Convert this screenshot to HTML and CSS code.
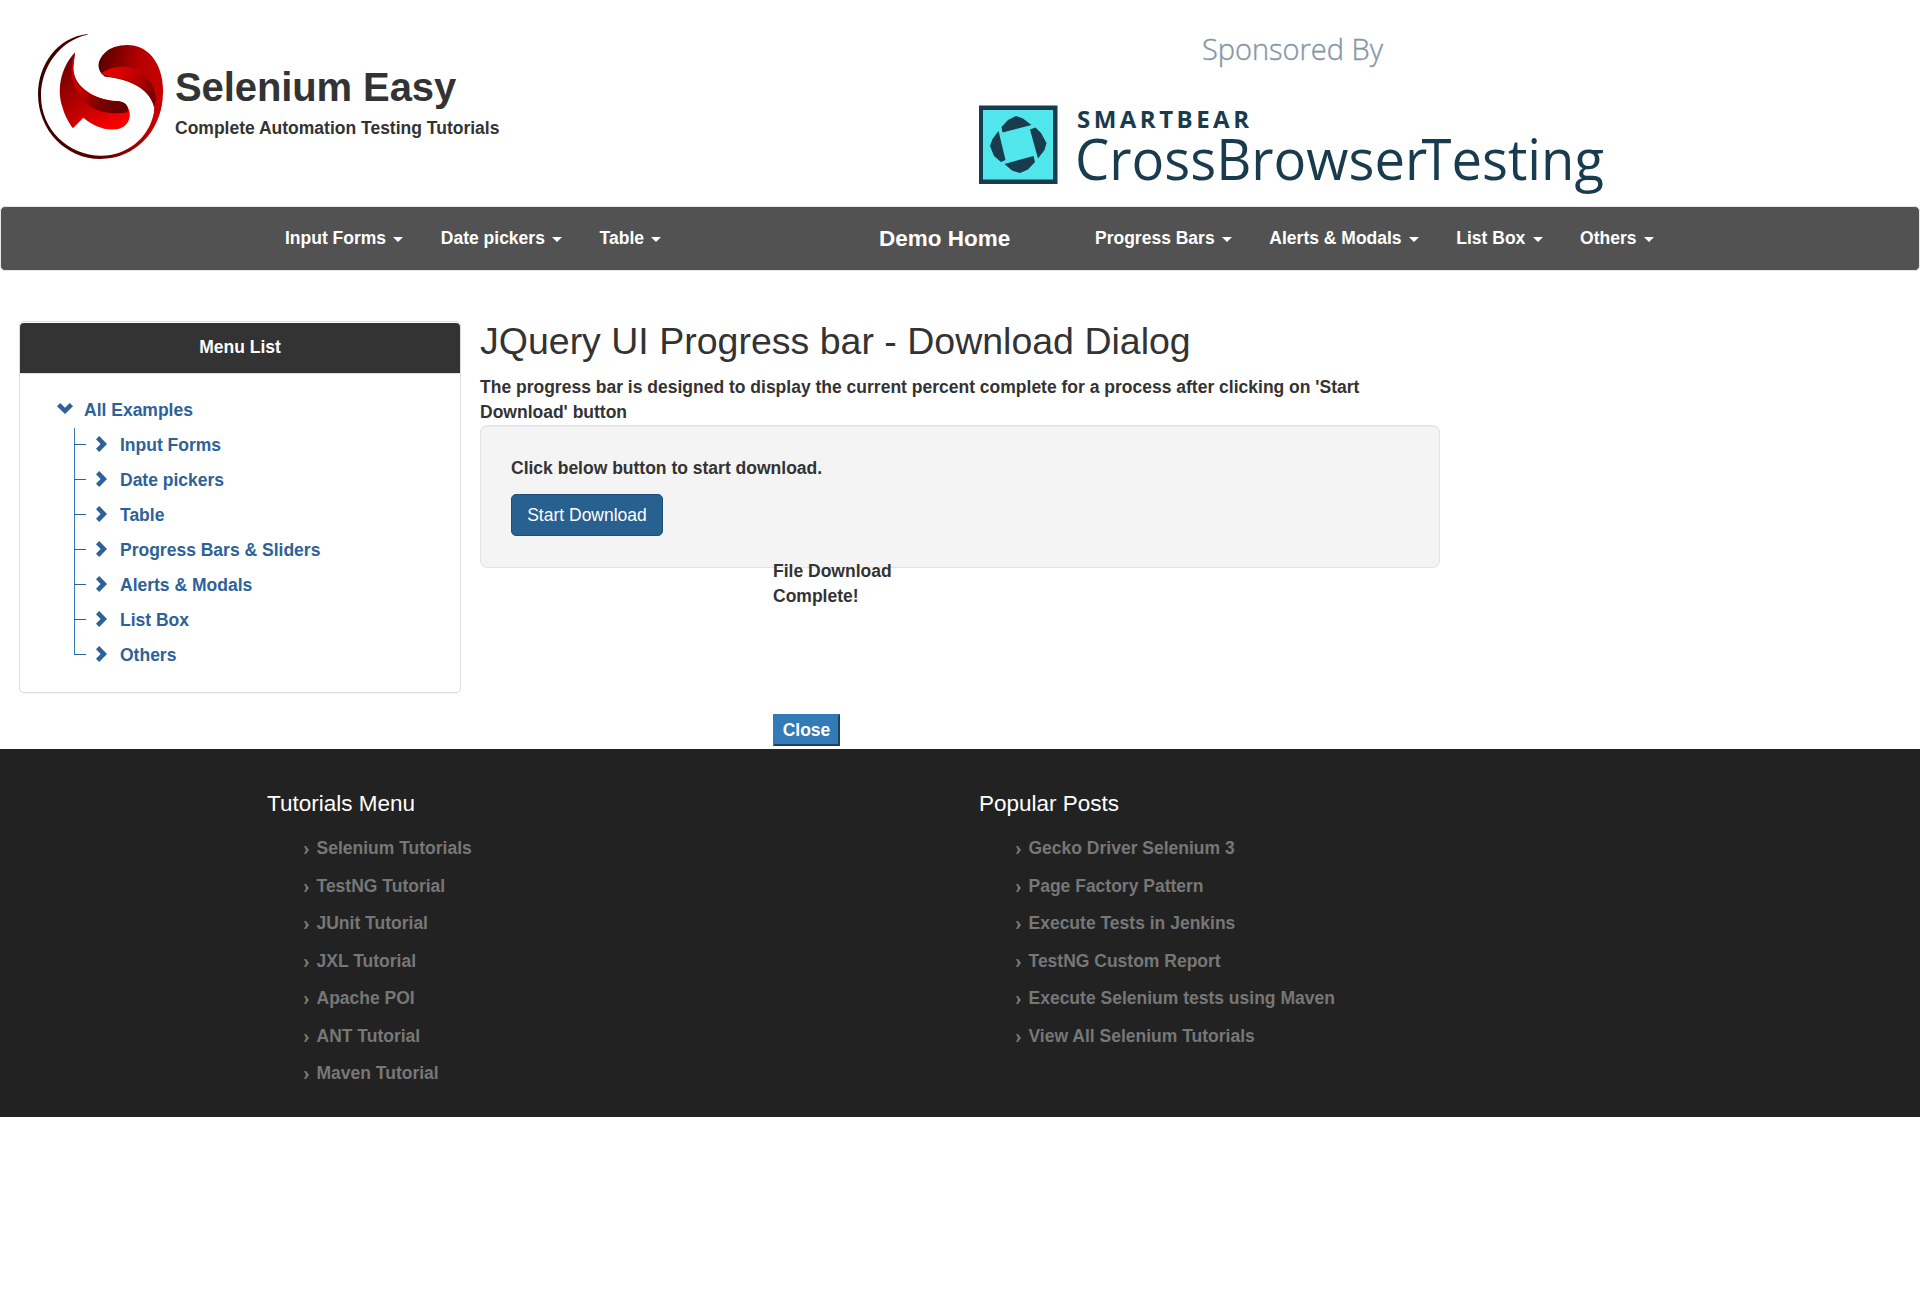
FILE: index.html
```html
<!DOCTYPE html>
<html lang="en">
<head>
<meta charset="utf-8">
<title>Selenium Easy - JQuery UI Progress bar</title>
<link rel="stylesheet" href="styles.css">
</head>
<body>
<svg class="defs" width="0" height="0" aria-hidden="true">
  <symbol id="chev-right" viewBox="0 0 11 16"><path d="M3.2 0 11 8 3.2 16 0 12.8 4.6 8 0 3.2Z"/></symbol>
  <symbol id="chev-down" viewBox="0 0 16 11"><path d="M0 3.2 3.2 0 8 4.7 12.8 0 16 3.2 8 11Z"/></symbol>
  <symbol id="chev-small" viewBox="0 0 5 8"><path d="M0 0H2L5 4 2 8H0L2 4Z"/></symbol>
</svg>
<header class="header">
  <a class="brand">
    <svg class="brand-logo" viewBox="0 0 375 375" width="125" height="125">
      <defs>
        <linearGradient id="ring" x1="0" y1="0" x2="1" y2="0"><stop offset="0" stop-color="#3a0000"/><stop offset=".5" stop-color="#5a0000"/><stop offset="1" stop-color="#d80000"/></linearGradient>
        <linearGradient id="top" x1="0" y1=".3" x2="1" y2=".5"><stop offset="0" stop-color="#5a0000"/><stop offset=".6" stop-color="#b80000"/><stop offset="1" stop-color="#c80000"/></linearGradient>
        <linearGradient id="fold" x1="0" y1="0" x2="1" y2=".6"><stop offset="0" stop-color="#f00000"/><stop offset=".5" stop-color="#c80000"/><stop offset="1" stop-color="#780000"/></linearGradient>
        <linearGradient id="low" x1=".1" y1=".1" x2=".7" y2="1"><stop offset="0" stop-color="#700000"/><stop offset=".5" stop-color="#b40000"/><stop offset="1" stop-color="#f80000"/></linearGradient>
        <linearGradient id="mid" x1="0" y1=".1" x2="1" y2=".8"><stop offset="0" stop-color="#d80000"/><stop offset=".35" stop-color="#c80000"/><stop offset=".65" stop-color="#800000"/><stop offset="1" stop-color="#600000"/></linearGradient>
      </defs>
      <path fill="url(#ring)" d="M148 0C60 10 0 90 0 180C0 290 85 375 187 375C292 375 368 292 374 190L347 240C330 315 265 365 190 365C90 365 9 285 9 185C9 100 65 20 148 2Z"/>
      <path fill="url(#top)" d="M201 128C174 110 176 80 200 57C222 34 275 25 310 42C360 67 380 130 374 190C370 236 356 268 333 292C345 262 350 240 348 213C330 165 280 136 201 128Z"/>
      <path fill="url(#fold)" d="M190 118C212 102 250 92 285 103C325 118 352 150 354 198L348 220C338 165 275 135 215 128Q199 126 190 118Z"/>
      <path fill="url(#low)" d="M111 55C65 105 58 170 72 215C80 245 92 265 105 283L136 251C165 275 200 291 240 285C275 277 282 242 270 222C262 205 245 200 220 201C160 190 105 155 106 100Z"/>
      <path fill="url(#mid)" d="M111 55C97 90 96 125 112 160C138 222 190 246 269 235C275 218 262 201 235 201C175 195 100 170 106 95Z"/>
    </svg>
    <span class="brand-text">
      <span class="brand-name">Selenium Easy</span>
      <span class="brand-slogan">Complete Automation Testing Tutorials</span>
    </span>
  </a>
  <a class="sponsor">
    <svg width="640" height="206" viewBox="970 0 640 206">
      <text class="sp-by" x="1202" y="60" textLength="181" lengthAdjust="spacingAndGlyphs">Sponsored By</text>
      <rect x="979" y="105.500" width="78.500" height="78.500" fill="#183b4d"/>
      <rect x="983" y="110" width="70" height="69.500" fill="#50e6ec"/>
      <g fill="#183b4d">
        <path d="M1002.500 132.500 1001.500 127 1008 120 1016 116 1023 118.500 1031.500 125Z"/>
        <path d="M1030 129.500 1035.500 127.500 1041 133 1046.500 143 1044.500 150 1038 158.500Z"/>
        <path d="M1004.500 164 1033.500 156 1035 162 1028 169.500 1020 173 1012 170.500Z"/>
        <path d="M998.500 131 1005.500 160 1001 162 994 156 990 146 992.500 139Z"/>
      </g>
      <text class="sp-bear" x="1077" y="127.500" textLength="172" lengthAdjust="spacing">SMARTBEAR</text>
      <text class="sp-cbt" x="1075" y="180" textLength="529" lengthAdjust="spacingAndGlyphs">CrossBrowser<tspan dx="-6">Testing</tspan></text>
    </svg>
  </a>
</header>
<nav class="nav">
  <ul class="nav-left">
    <li>Input Forms<i class="caret"></i></li><li>Date pickers<i class="caret"></i></li><li>Table<i class="caret"></i></li>
  </ul>
  <a class="nav-home">Demo Home</a>
  <ul class="nav-right">
    <li>Progress Bars<i class="caret"></i></li><li>Alerts &amp; Modals<i class="caret"></i></li><li>List Box<i class="caret"></i></li><li>Others<i class="caret"></i></li>
  </ul>
</nav>
<div class="content">
  <aside class="panel">
    <div class="panel-head">Menu List</div>
    <div class="tree">
      <div class="tree-root"><svg width="16" height="11"><use href="#chev-down"/></svg>All Examples</div>
      <ul class="tree-list">
        <li><svg width="11" height="16"><use href="#chev-right"/></svg>Input Forms</li>
        <li><svg width="11" height="16"><use href="#chev-right"/></svg>Date pickers</li>
        <li><svg width="11" height="16"><use href="#chev-right"/></svg>Table</li>
        <li><svg width="11" height="16"><use href="#chev-right"/></svg>Progress Bars &amp; Sliders</li>
        <li><svg width="11" height="16"><use href="#chev-right"/></svg>Alerts &amp; Modals</li>
        <li><svg width="11" height="16"><use href="#chev-right"/></svg>List Box</li>
        <li><svg width="11" height="16"><use href="#chev-right"/></svg>Others</li>
      </ul>
    </div>
  </aside>
  <main class="main">
    <h2>JQuery UI Progress bar - Download Dialog</h2>
    <p class="intro">The progress bar is designed to display the current percent complete for a process after clicking on 'Start Download' button</p>
    <section class="well">
      <p>Click below button to start download.</p>
      <button class="btn-start">Start Download</button>
    </section>
    <div class="dialog">
      <p>File Download Complete!</p>
      <button class="btn-close">Close</button>
    </div>
  </main>
</div>
<footer class="footer">
  <section>
    <h3>Tutorials Menu</h3>
    <ul>
      <li><svg width="5" height="8"><use href="#chev-small"/></svg>Selenium Tutorials</li>
      <li><svg width="5" height="8"><use href="#chev-small"/></svg>TestNG Tutorial</li>
      <li><svg width="5" height="8"><use href="#chev-small"/></svg>JUnit Tutorial</li>
      <li><svg width="5" height="8"><use href="#chev-small"/></svg>JXL Tutorial</li>
      <li><svg width="5" height="8"><use href="#chev-small"/></svg>Apache POI</li>
      <li><svg width="5" height="8"><use href="#chev-small"/></svg>ANT Tutorial</li>
      <li><svg width="5" height="8"><use href="#chev-small"/></svg>Maven Tutorial</li>
    </ul>
  </section>
  <section>
    <h3>Popular Posts</h3>
    <ul>
      <li><svg width="5" height="8"><use href="#chev-small"/></svg>Gecko Driver Selenium 3</li>
      <li><svg width="5" height="8"><use href="#chev-small"/></svg>Page Factory Pattern</li>
      <li><svg width="5" height="8"><use href="#chev-small"/></svg>Execute Tests in Jenkins</li>
      <li><svg width="5" height="8"><use href="#chev-small"/></svg>TestNG Custom Report</li>
      <li><svg width="5" height="8"><use href="#chev-small"/></svg>Execute Selenium tests using Maven</li>
      <li><svg width="5" height="8"><use href="#chev-small"/></svg>View All Selenium Tutorials</li>
    </ul>
  </section>
</footer>
</body>
</html>
```
FILE: styles.css
```css
* { box-sizing: border-box; }
body { margin: 0; background: #fff; color: #333; font: bold 17.5px/25px "Liberation Sans", Arial, sans-serif; }
ul { list-style: none; margin: 0; padding: 0; }
p, h2, h3 { margin: 0; }
svg { display: block; flex: none; }
.defs { position: absolute; }

.header { display: flex; height: 206px; }
.brand { display: flex; width: 970px; padding: 34px 0 0 38px; }
.brand-text { display: flex; flex-direction: column; padding: 30px 0 0 12px; }
.brand-name { font-size: 40px; line-height: 46px; letter-spacing: -.1px; }
.brand-slogan { line-height: 25px; margin-top: 6px; }
.sp-by { font: 300 30px "Open Sans", sans-serif; fill: #8796a3; stroke: #8796a3; stroke-width: .4px; }
.sp-bear { font: 700 24px "Open Sans", sans-serif; fill: #183b4d; }
.sp-cbt { font: 400 56px "Open Sans", sans-serif; fill: #183b4d; }

.nav { display: flex; height: 65px; padding-top: 19px; background: #525252; border: 1px solid #e7e7e7; border-radius: 5px; color: #fff; }
.nav ul { display: flex; gap: 37.5px; white-space: nowrap; }
.nav-left { width: 594px; margin-left: 284px; }
.nav-home { width: 216px; font-size: 22.5px; }
.caret { display: inline-block; margin-left: 7.2px; vertical-align: middle; border: 5px solid transparent; border-top-color: #fff; border-bottom: 0; }

.content { display: flex; align-items: flex-start; height: 478px; padding: 50px 19px 0; }
.panel { width: 442px; height: 372px; padding-top: 1px; border: 1px solid #ddd; border-radius: 5px; box-shadow: 0 1px 1px rgba(0,0,0,.05); }
.panel-head { height: 51px; padding-top: 12px; background: #333; border-bottom: 1px solid #ddd; border-radius: 4px 4px 0 0; color: #fff; text-align: center; }
.tree { padding: 24px 0 0 37px; color: #2d6299; fill: #2d6299; }
.tree-root { display: flex; align-items: center; gap: 11px; height: 25px; }
.tree-root svg { margin-bottom: 4px; }
.tree-list { margin: 5px 0 0 17px; }
.tree-list li { display: flex; align-items: center; height: 35px; background: linear-gradient(#337ab7, #337ab7) 0 0 / 1px 100% no-repeat; }
.tree-list li::before { content: ""; width: 12px; height: 1px; margin: 0 10px 2px 0; background: #2d6299; }
.tree-list li:last-child { background-size: 1px 17px; }
.tree-list svg { margin: 0 13px 3px 0; }

.main { width: 960px; margin-left: 19px; }
.main h2 { font-size: 37.5px; line-height: 41px; font-weight: 400; }
.intro { margin-top: 13px; }
.well { height: 143px; padding: 30px; background: #f4f4f4; border: 1px solid #e3e3e3; border-radius: 7px; box-shadow: inset 0 1px 1px rgba(0,0,0,.05); }
.btn-start { display: block; width: 152px; height: 42px; margin-top: 13px; padding: 0; background: #286090; border: 1px solid #204d74; border-radius: 5px; color: #fff; font: 400 17.5px/25px "Liberation Sans", Arial, sans-serif; }
.dialog { position: relative; width: 160px; height: 180px; margin: -9px 0 0 293px; }
.btn-close { display: block; width: 67px; height: 32px; margin-top: 105px; padding: 0; background: #337ab7; border: 2px outset #337ab7; color: #fff; font: bold 17.5px/25px "Liberation Sans", Arial, sans-serif; }

.footer { display: flex; height: 368px; padding: 42px 0 0 267px; background: #222; color: #777; }
.footer section { width: 712px; }
.footer h3 { color: #fff; font-size: 22.5px; line-height: 25px; font-weight: 400; }
.footer ul { margin: 13px 0 0 37px; }
.footer li { display: flex; height: 37.5px; padding-top: 7px; }
.footer li svg { margin: 10px 7.5px 0 0; fill: #77776b; }
```
